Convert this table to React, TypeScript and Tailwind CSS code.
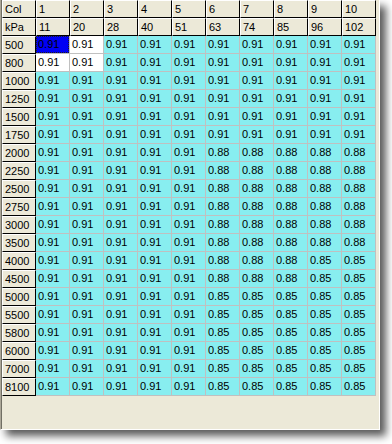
const cols = ["1", "2", "3", "4", "5", "6", "7", "8", "9", "10"];
const loads = ["11", "20", "28", "40", "51", "63", "74", "85", "96", "102"];

const lowRpm = Array(10).fill("0.91");
const midRpm = [...Array(5).fill("0.91"), ...Array(5).fill("0.88")];
const mixRpm = [...Array(5).fill("0.91"), "0.88", "0.88", "0.88", "0.85", "0.85"];
const highRpm = [...Array(5).fill("0.91"), ...Array(5).fill("0.85")];

const rows = [
    { rpm: "500", vals: lowRpm },
    { rpm: "800", vals: lowRpm },
    { rpm: "1000", vals: lowRpm },
    { rpm: "1250", vals: lowRpm },
    { rpm: "1500", vals: lowRpm },
    { rpm: "1750", vals: lowRpm },
    { rpm: "2000", vals: midRpm },
    { rpm: "2250", vals: midRpm },
    { rpm: "2500", vals: midRpm },
    { rpm: "2750", vals: midRpm },
    { rpm: "3000", vals: midRpm },
    { rpm: "3500", vals: midRpm },
    { rpm: "4000", vals: mixRpm },
    { rpm: "4500", vals: mixRpm },
    { rpm: "5000", vals: highRpm },
    { rpm: "5500", vals: highRpm },
    { rpm: "5800", vals: highRpm },
    { rpm: "6000", vals: highRpm },
    { rpm: "7000", vals: highRpm },
    { rpm: "8100", vals: highRpm },
];

// raised grey header cell, like a win32 grid fixed cell
const Fixed = ({ text }: { text: string }) => (
    <div className="w-[34px] h-[18px] shrink-0 border border-white border-r-black border-b-black bg-[#ece9d8] pl-[2px] leading-[16px]">
        {text}
    </div>
);

const Cell = ({ text, r, c }: { text: string; r: number; c: number }) => {
    // cursor on first cell, the block beside it is selected
    if (r === 0 && c === 0) {
        return (
            <div className="w-[34px] h-[18px] shrink-0 border-r border-b border-[#c0c0c0] bg-[#0000f4]">
                <div className="h-full border border-dotted border-[#202020] pl-[1px] leading-[15px]">{text}</div>
            </div>
        );
    }
    const picked = r < 2 && c < 2;
    return (
        <div className={`w-[34px] h-[18px] shrink-0 border-r border-b border-[#c0c0c0] pl-[2px] leading-[17px] ${picked ? "bg-white" : "bg-[#88eef0]"}`}>
            {text}
        </div>
    );
};

export default function App() {
    return (
        <div className="w-[392px] h-[444px] bg-white" style={{ fontFamily: '"Liberation Sans", Arial, sans-serif' }}>
            <div className="w-[380px] h-[430px] bg-[#ece9d8] border-l border-l-[#aca899] border-r border-b border-white shadow-[6px_6px_8px_rgba(0,0,0,0.65)] text-[11px] text-black">
                <div className="h-full border-l border-l-[#716f64]">
                    <div className="flex">
                        <Fixed text="Col" />
                        {cols.map((c) => <Fixed key={c} text={c} />)}
                    </div>
                    <div className="flex">
                        <Fixed text="kPa" />
                        {loads.map((l) => <Fixed key={l} text={l} />)}
                    </div>
                    {rows.map((row, r) => (
                        <div className="flex" key={row.rpm}>
                            <Fixed text={row.rpm} />
                            {row.vals.map((v, c) => <Cell key={c} text={v} r={r} c={c} />)}
                        </div>
                    ))}
                </div>
            </div>
        </div>
    );
}
